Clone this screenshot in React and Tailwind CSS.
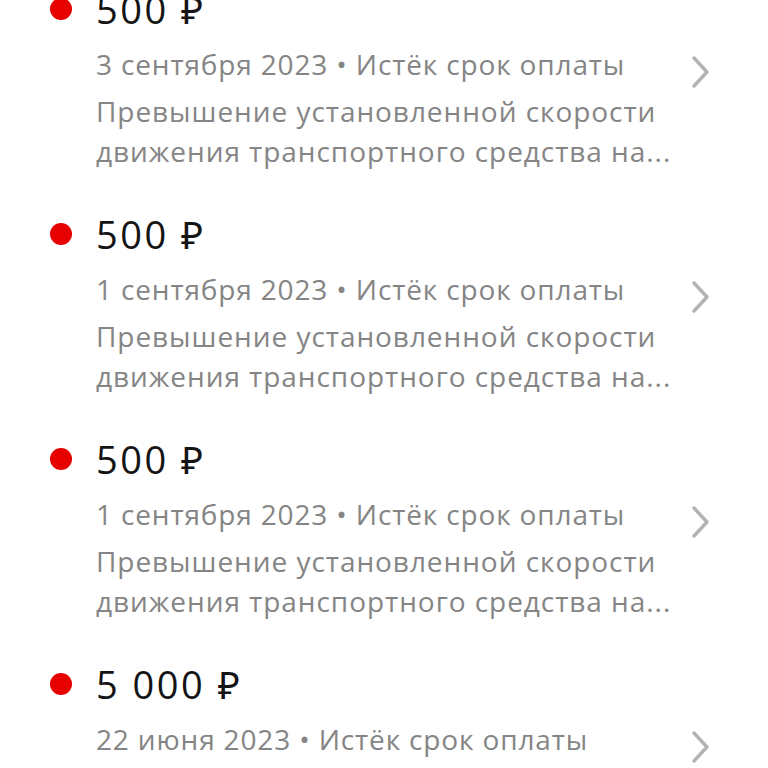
import React from 'react';

const fines = [
  { amount: '500 ₽', date: '3 сентября 2023' },
  { amount: '500 ₽', date: '1 сентября 2023' },
  { amount: '500 ₽', date: '1 сентября 2023' },
  { amount: '5 000 ₽', date: '22 июня 2023' },
];

const Chevron = () => (
  <svg width="28" height="36" viewBox="0 0 28 36" fill="none">
    <path d="M8 4 L21 18 L8 32" stroke="#b3b3b3" strokeWidth="3.4" strokeLinecap="round" strokeLinejoin="round" />
  </svg>
);

const FineRow = ({ fine }) => (
  <div className="flex pb-[41px]">
    <div className="w-[96px] flex justify-start pl-[50px] pt-[11px]">
      <div className="w-[22px] h-[22px] rounded-full bg-[#e60000]"></div>
    </div>
    <div className="w-[590px]">
      <div className="text-[38px] leading-[44px] tracking-[2.5px] text-[#141414]">{fine.amount}</div>
      <div className="mt-[13px] text-[28px] leading-[40px] tracking-[0.85px] text-[#858585] whitespace-nowrap">
        {fine.date} • Истёк срок оплаты
      </div>
      <div className="mt-[7px] text-[28px] leading-[40px] tracking-[0.95px] text-[#858585] whitespace-nowrap">
        Превышение установленной скорости
        <br />
        движения транспортного средства на...
      </div>
    </div>
    <div className="pt-[67px]">
      <Chevron />
    </div>
  </div>
);

export default function App() {
  return (
    <div className="w-[768px] h-[768px] overflow-hidden bg-white" style={{ fontFamily: '"Open Sans", "Noto Sans", sans-serif' }}>
      <div className="-mt-[13px]">
        {fines.map((fine, i) => (
          <FineRow key={i} fine={fine} />
        ))}
      </div>
    </div>
  );
}
